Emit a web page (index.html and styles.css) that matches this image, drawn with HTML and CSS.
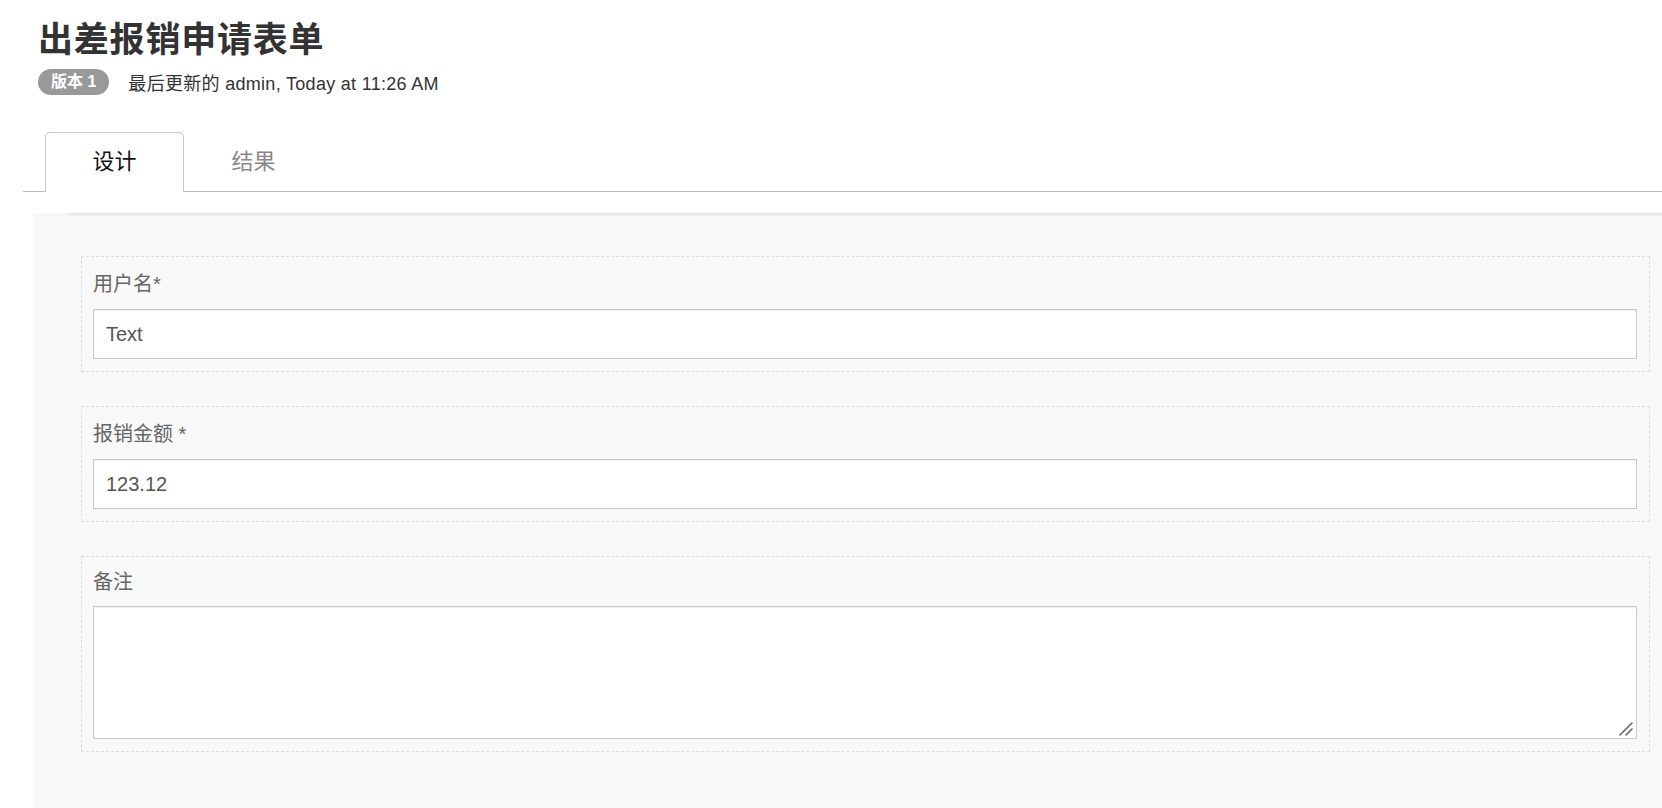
FILE: index.html
```html
<!DOCTYPE html>
<html lang="zh-CN">
<head>
<meta charset="UTF-8" />
<title>出差报销申请表单</title>
<link rel="stylesheet" href="styles.css">
</head>
<body>
    <div class="page-header">
        <h1 class="form-title">出差报销申请表单</h1>
        <div class="form-meta">
            <span class="version-badge">版本 1</span>
            <span class="updated">最后更新的 admin, Today at 11:26 AM</span>
        </div>
    </div>

    <div class="tabs">
        <div class="tab active">设计</div>
        <div class="tab">结果</div>
    </div>

    <div class="canvas">
        <div class="field">
            <label class="field-label">用户名*</label>
            <input class="field-input" type="text" value="Text">
        </div>
        <div class="field">
            <label class="field-label">报销金额 *</label>
            <input class="field-input" type="text" value="123.12">
        </div>
        <div class="field field-notes">
            <label class="field-label">备注</label>
            <textarea class="field-textarea"></textarea>
        </div>
    </div>
</body>
</html>
```

FILE: styles.css
```css
html, body {
    margin: 0;
    padding: 0;
    height: 100%;
    overflow: hidden;
}

body {
    font-family: "Liberation Sans", "Noto Sans CJK SC", sans-serif;
    background: #fff;
    color: #333;
}

.page-header {
    padding: 18px 0 0 38px;
}

.form-title {
    margin: 0;
    font-size: 35px;
    line-height: 44px;
    font-weight: bold;
    color: #333;
    letter-spacing: 0.8px;
}

.form-meta {
    display: flex;
    align-items: center;
    margin-top: 7px;
    gap: 19px;
}

.version-badge {
    display: inline-block;
    background: #999;
    color: #fff;
    font-weight: bold;
    font-size: 16px;
    line-height: 26px;
    height: 26px;
    padding: 0 13px;
    border-radius: 13px;
}

.updated {
    font-size: 18px;
    letter-spacing: 0.3px;
    color: #333;
}

.tabs {
    display: flex;
    margin: 37px 0 0 23px;
    padding-left: 22px;
    border-bottom: 1px solid #bbb;
}

.tab {
    width: 139px;
    height: 58px;
    line-height: 58px;
    text-align: center;
    font-size: 22px;
    color: #888;
    box-sizing: border-box;
    border: 1px solid transparent;
    border-bottom: none;
    margin-bottom: -1px;
}

.tab.active {
    color: #111;
    background: #fff;
    border-color: #c8c8c8;
    border-radius: 5px 5px 0 0;
    height: 60px;
    line-height: 58px;
    padding-bottom: 1px;
}

.canvas {
    margin: 21px 0 0 33px;
    background: #f8f8f8;
    padding: 0 12px 0 48px;
    height: 595px;
    box-sizing: border-box;
}

.canvas::before {
    content: "";
    display: block;
    height: 3px;
    margin: 0 -12px 0 -13px;
    background: linear-gradient(#e4e4e4, #f3f3f3);
}

.field {
    border: 1px dashed #dcdcdc;
    padding: 12px 12px 12px 11px;
    margin-top: 40px;
}

.field + .field {
    margin-top: 34px;
}

.field-label {
    display: block;
    font-size: 20px;
    line-height: 30px;
    color: #666;
    margin-bottom: 10px;
}

.field-notes {
    padding-top: 10px;
}

.field-notes .field-label {
    margin-bottom: 9px;
}

.field-input,
.field-textarea {
    display: block;
    width: 100%;
    box-sizing: border-box;
    border: 1px solid #c8c8c8;
    box-shadow: inset 0 1px 1px rgba(0,0,0,0.06);
    background: #fff;
    font-family: "Liberation Sans", "Noto Sans CJK SC", sans-serif;
    font-size: 20px;
    color: #555;
    margin: 0;
    outline: none;
}

.field-input {
    height: 50px;
    padding: 0 12px;
}

.field-textarea {
    height: 133px;
    padding: 10px 12px;
    resize: none;
    background: #fff url("data:image/svg+xml,%3Csvg xmlns='http://www.w3.org/2000/svg' width='14' height='14'%3E%3Cpath d='M1 13L13 1M7 13L13 7' stroke='%23666' stroke-width='1.6' stroke-linecap='round'/%3E%3C/svg%3E") no-repeat right 3px bottom 2px;
}
```
